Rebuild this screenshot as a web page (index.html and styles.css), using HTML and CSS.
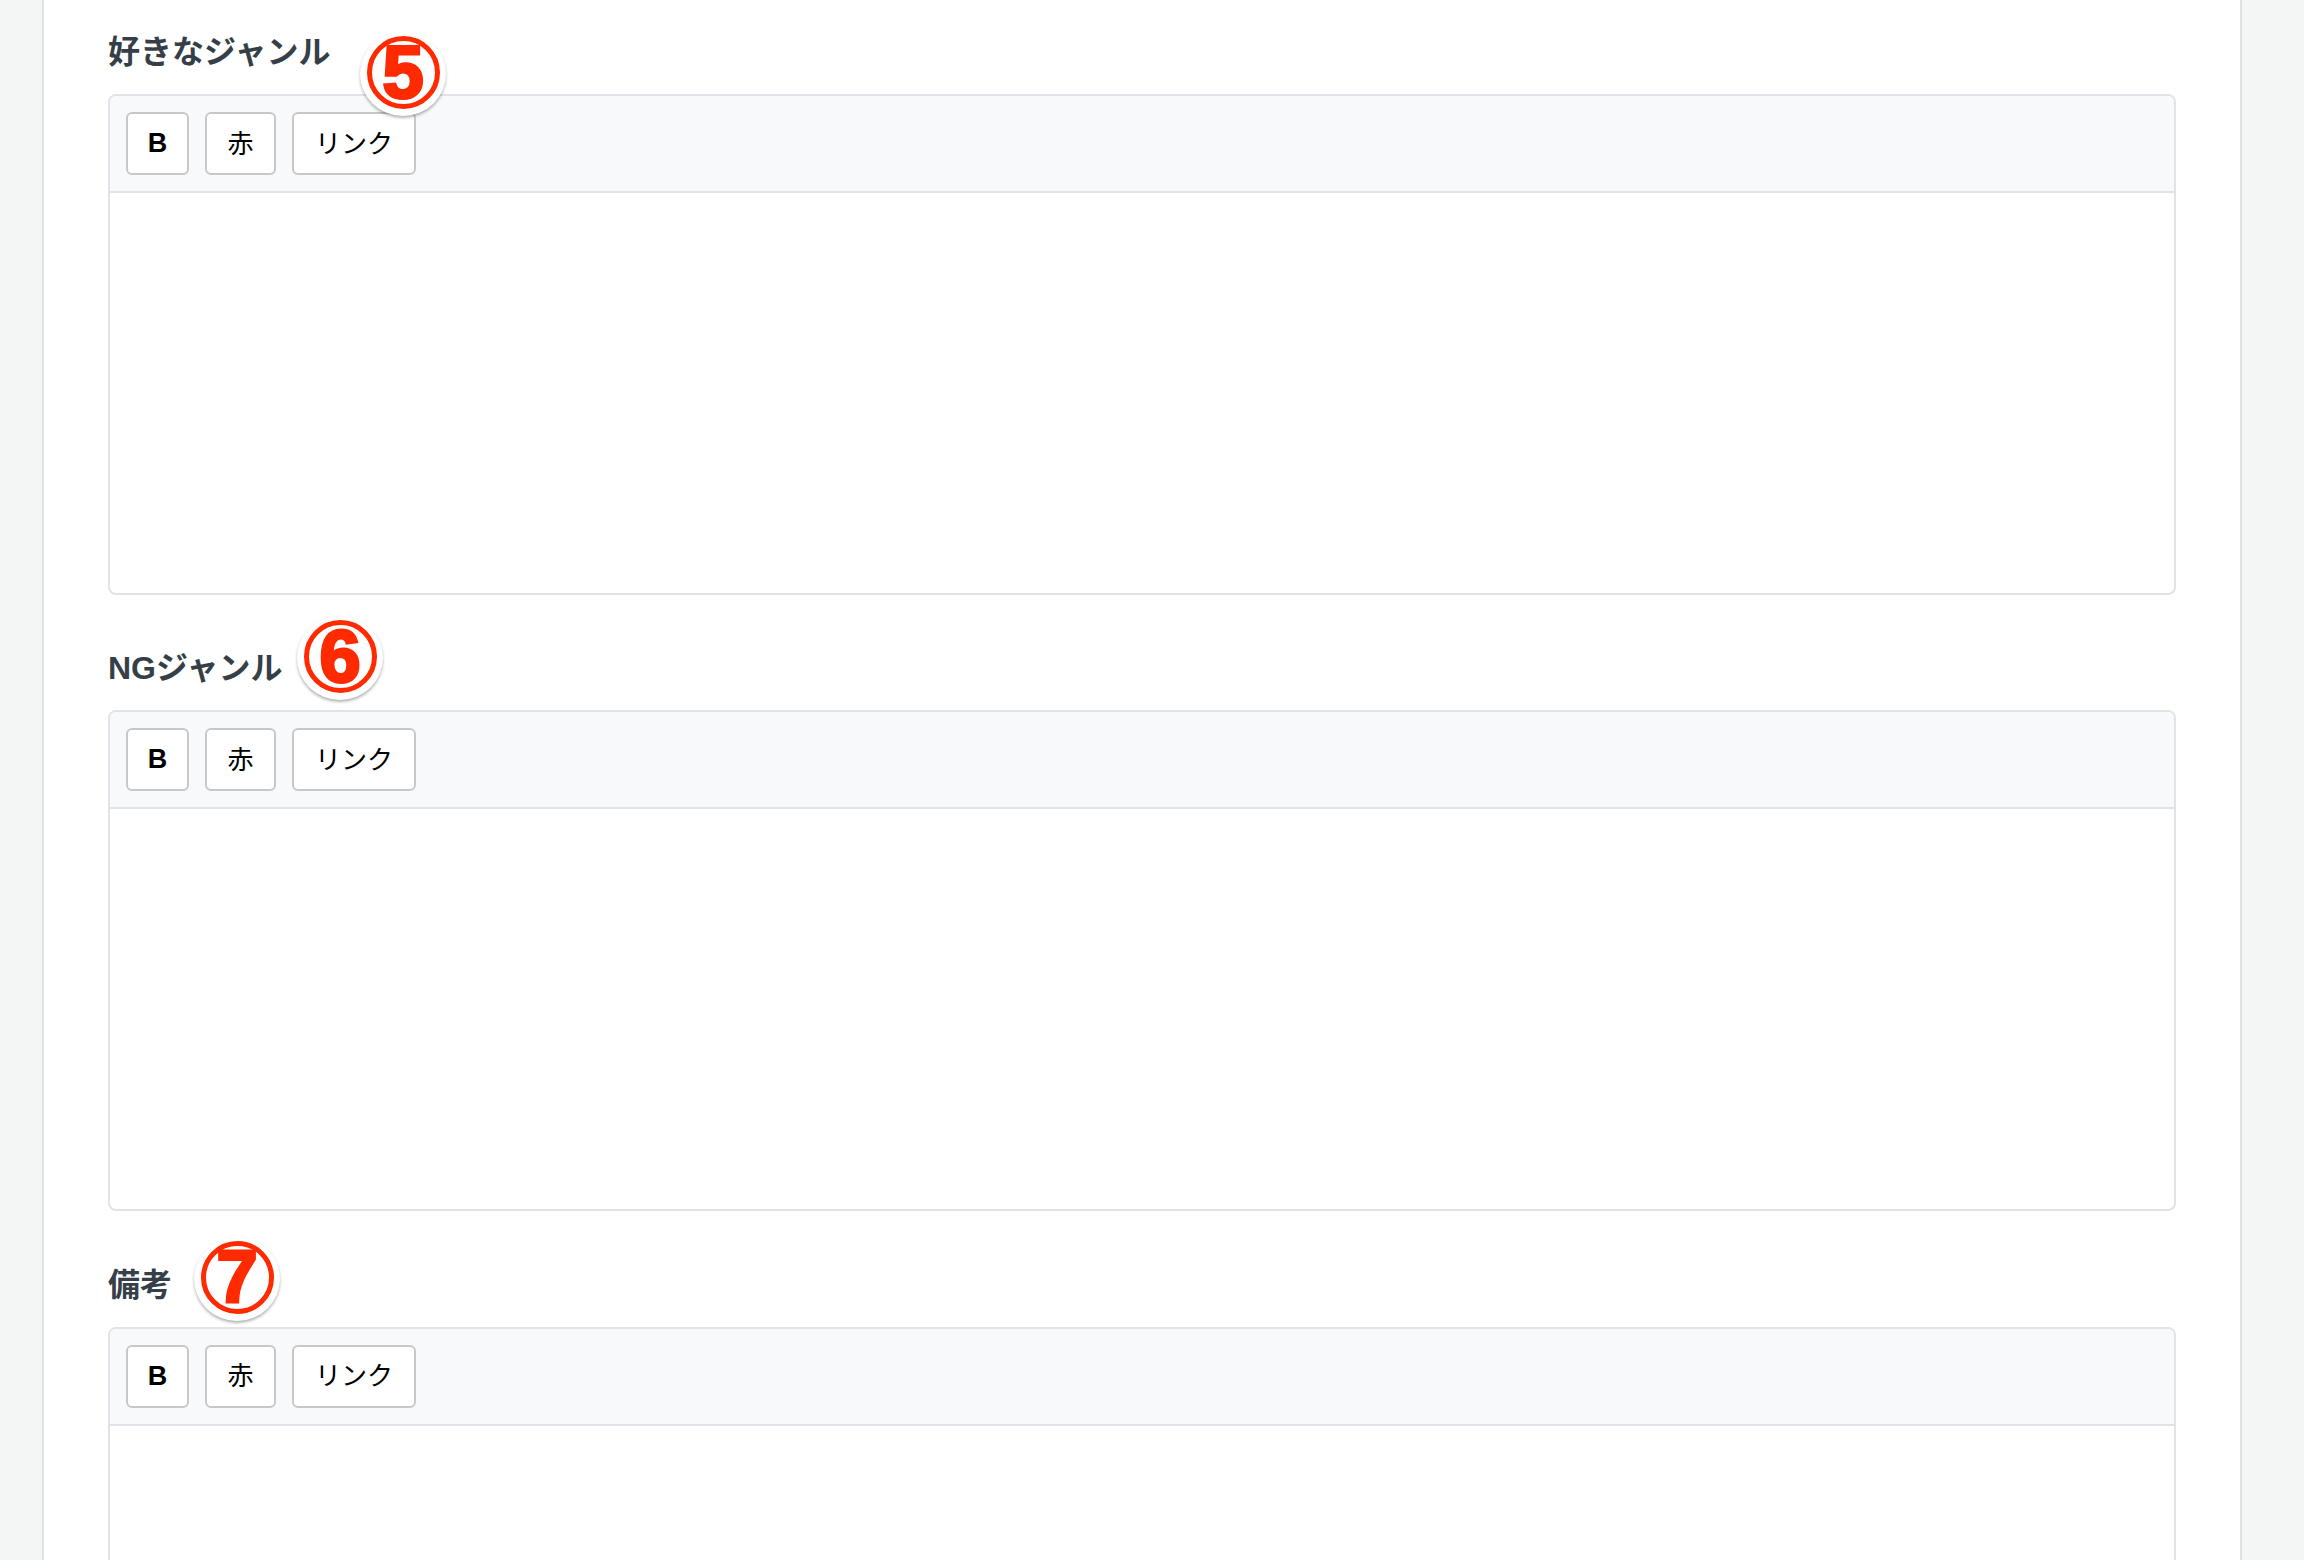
FILE: index.html

```html
<!DOCTYPE html>
<html lang="ja">
<head>
  <meta charset="utf-8">
  <title>ジャンル設定</title>
  <link rel="stylesheet" href="styles.css">
</head>
<body>
  <main class="card">
    <section class="field">
      <h3 class="field-label">好きなジャンル<span class="badge badge-five"><span class="badge-ring">5</span></span></h3>
      <div class="editor">
        <div class="toolbar">
          <button class="tool tool-bold">B</button>
          <button class="tool tool-red">赤</button>
          <button class="tool tool-link">リンク</button>
        </div>
        <div class="editor-body"></div>
      </div>
    </section>

    <section class="field">
      <h3 class="field-label">NGジャンル<span class="badge badge-six"><span class="badge-ring">6</span></span></h3>
      <div class="editor">
        <div class="toolbar">
          <button class="tool tool-bold">B</button>
          <button class="tool tool-red">赤</button>
          <button class="tool tool-link">リンク</button>
        </div>
        <div class="editor-body"></div>
      </div>
    </section>

    <section class="field">
      <h3 class="field-label">備考<span class="badge badge-seven"><span class="badge-ring">7</span></span></h3>
      <div class="editor">
        <div class="toolbar">
          <button class="tool tool-bold">B</button>
          <button class="tool tool-red">赤</button>
          <button class="tool tool-link">リンク</button>
        </div>
        <div class="editor-body"></div>
      </div>
    </section>
  </main>
</body>
</html>
```

FILE: styles.css

```css
html,
body {
  height: 100%;
}

body {
  margin: 0;
  height: 1560px;
  overflow: hidden;
  background-color: #f4f6f5;
  font-family: "Liberation Sans", "Noto Sans CJK JP", sans-serif;
}

/* White sheet in the middle of the page */
.card {
  box-sizing: border-box;
  width: 2200px;
  height: 1560px;
  margin-left: 42px;
  padding: 28px 64px 0 64px;
  background-color: #fff;
  border-left: 2px solid #e0e1e6;
  border-right: 2px solid #e0e1e6;
  overflow: hidden;
}

.field {
  margin-bottom: 49.4px;
}

.field-label {
  position: relative;
  margin: 0 0 15px;
  height: 51px;
  line-height: 49px;
  font-size: 32px;
  font-weight: 700;
  color: #363f48;
}

/* Editor box */
.editor {
  height: 501px;
  box-sizing: border-box;
  border: 2px solid #e2e3e8;
  border-radius: 8px;
  overflow: hidden;
}

.toolbar {
  display: flex;
  gap: 16px;
  box-sizing: border-box;
  height: 97px;
  padding: 16px 16px;
  background-color: #f8f9fa;
  border-bottom: 2px solid #e2e3e8;
}

.tool {
  box-sizing: border-box;
  height: 63px;
  padding: 0 0 5px;
  background-color: #fff;
  border: 2px solid #c8c8c8;
  border-radius: 6px;
  font-family: inherit;
  font-size: 26px;
  color: #000;
}

.tool-bold {
  width: 63px;
  padding-bottom: 0;
  font-size: 27px;
  font-weight: 700;
}

.tool-red {
  width: 71px;
}

.tool-link {
  width: 124px;
}

/* Numbered callouts pasted over the form */
.badge {
  position: absolute;
  display: flex;
  align-items: center;
  justify-content: center;
  box-sizing: border-box;
  width: 86px;
  height: 84px;
  padding-bottom: 3px;
  background-color: #fff;
  border-radius: 50%;
  box-shadow: 0 2px 3px rgba(0, 0, 0, 0.3);
}

.badge-five {
  left: 252px;
  top: 4px;
}

.badge-six {
  left: 189px;
  top: -28px;
}

.badge-seven {
  left: 86px;
  top: -24px;
}

.badge-ring {
  display: flex;
  align-items: center;
  justify-content: center;
  box-sizing: border-box;
  width: 73px;
  height: 73px;
  border: 5px solid #ff2a00;
  border-radius: 50%;
  font-family: "Liberation Sans", sans-serif;
  font-size: 74px;
  font-weight: 700;
  line-height: 1;
  color: #ff2a00;
  -webkit-text-stroke: 3px #ff2a00;
}
```
